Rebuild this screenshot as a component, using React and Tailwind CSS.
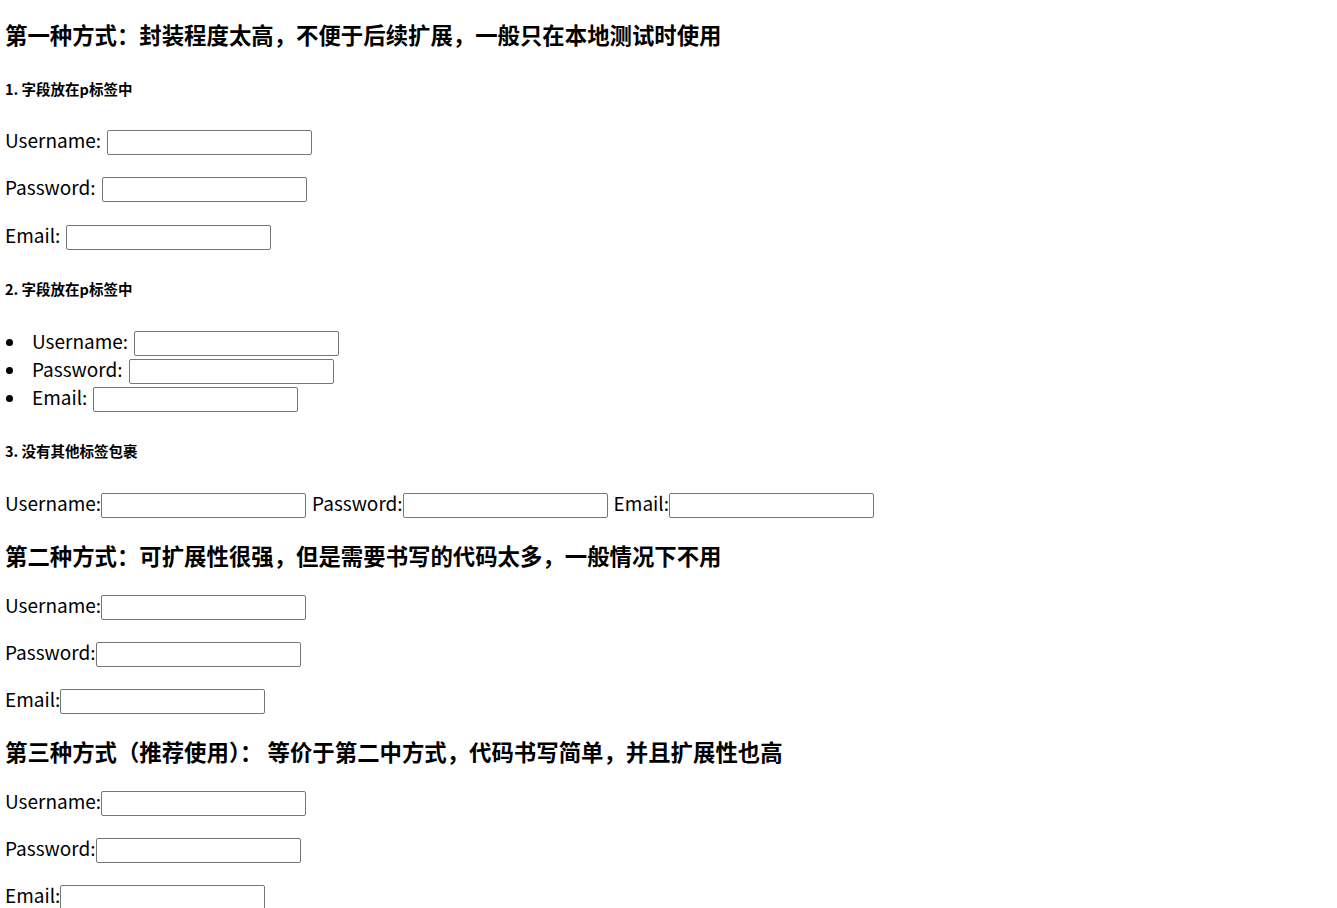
import React from 'react'

const font = { fontFamily: '"Noto Sans CJK SC", "Noto Sans", sans-serif' }

const Field = ({ className = '' }) => (
  <input type="text" className={`w-[205px] h-[25px] mt-[3px] border border-[#767676] rounded-[2px] bg-white outline-none ${className}`} />
)

const Label = ({ children, className = '' }) => <span className={`pb-[2px] ${className}`}>{children}</span>

const H3 = ({ children, className = '' }) => (
  <h3 className={`h-[30px] leading-[26px] text-[22.4px] font-bold text-black whitespace-pre ${className}`}>{children}</h3>
)

const H5 = ({ children, className = '' }) => (
  <h5 className={`h-[20px] leading-[20px] text-[14.5px] font-bold text-black ${className}`}>{children}</h5>
)

const Row = ({ label, gap = true, className = '' }) => (
  <p className={`h-[28px] flex items-center ${className}`}>
    <Label>{label}</Label>
    <Field className={gap ? 'ml-[6px]' : ''} />
  </p>
)

const Item = ({ label }) => (
  <li className="h-[28px] flex items-center">
    <span className="w-[27px] flex items-center">
      <span className="w-[7px] h-[7px] rounded-full bg-black ml-[1px]" />
    </span>
    <Label>{label}</Label>
    <Field className="ml-[6px]" />
  </li>
)

export default function App() {
  return (
    <div className="min-h-[908px] bg-white text-black text-[19px] pl-[5px] flex flex-col" style={font}>
      <H3 className="mt-[21px]">第一种方式：封装程度太高，不便于后续扩展，一般只在本地测试时使用</H3>

      <H5 className="mt-[28px]">1. 字段放在p标签中</H5>
      <Row label="Username:" className="mt-[28px]" />
      <Row label="Password:" className="mt-[19px]" />
      <Row label="Email:" className="mt-[20px]" />

      <H5 className="mt-[29px]">2. 字段放在p标签中</H5>
      <ul className="mt-[29px] flex flex-col">
        <Item label="Username:" />
        <Item label="Password:" />
        <Item label="Email:" />
      </ul>

      <H5 className="mt-[29px]">3. 没有其他标签包裹</H5>
      <div className="mt-[29px] h-[28px] flex items-center">
        <Label>Username:</Label>
        <Field />
        <Label className="ml-[6px]">Password:</Label>
        <Field />
        <Label className="ml-[6px]">Email:</Label>
        <Field />
      </div>

      <H3 className="mt-[24px]">第二种方式：可扩展性很强，但是需要书写的代码太多，一般情况下不用</H3>
      <Row label="Username:" gap={false} className="mt-[20px]" />
      <Row label="Password:" gap={false} className="mt-[19px]" />
      <Row label="Email:" gap={false} className="mt-[19px]" />

      <H3 className="mt-[24px]">第三种方式（推荐使用）： 等价于第二中方式，代码书写简单，并且扩展性也高</H3>
      <Row label="Username:" gap={false} className="mt-[20px]" />
      <Row label="Password:" gap={false} className="mt-[19px]" />
      <Row label="Email:" gap={false} className="mt-[19px]" />
    </div>
  )
}
